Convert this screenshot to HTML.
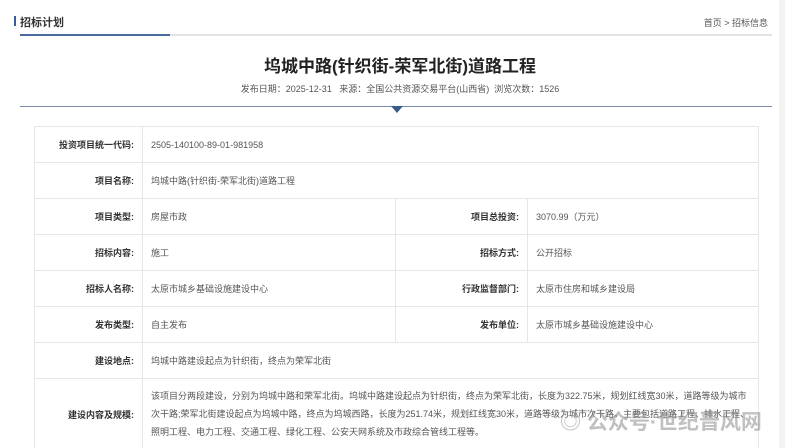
<!DOCTYPE html>
<html><head><meta charset="utf-8"><style>
html,body{margin:0;width:800px;height:448px;overflow:hidden}
body{background:#fff;font-family:"Liberation Sans","Noto Sans CJK SC",sans-serif;color:#333;position:relative}
.hd{position:absolute;left:20px;top:14px;font-size:11px;font-weight:bold;color:#333}
.hd:before{content:"";position:absolute;left:-6px;top:2px;width:2px;height:10px;background:#3a5a9a}
.bc{position:absolute;right:32px;top:16px;font-size:9px;color:#555}
.gl{position:absolute;left:20px;top:34px;width:752px;height:2px;background:#e3e3e3}
.bl{position:absolute;left:20px;top:34px;width:150px;height:2px;background:#4a6aa0}
.t{position:absolute;left:0;width:800px;text-align:center}
.title{top:52px;font-size:17px;font-weight:bold;color:#222}
.meta{top:82px;font-size:9px;color:#555}
.dv{position:absolute;left:20px;top:106px;width:752px;height:1px;background:#7a8aa8}
.tri{position:absolute;left:391px;top:106px;width:0;height:0;border-left:6px solid transparent;border-right:6px solid transparent;border-top:7px solid #3a5a8a}
table{position:absolute;left:34px;top:126px;width:725px;border-collapse:collapse;font-size:9px}
td{border:1px solid #e6e6e6;height:35px;padding:0 8px;color:#555}
td.l{text-align:right;font-weight:bold;color:#333;width:91px}
td.l2{text-align:right;font-weight:bold;color:#333;width:115px}
.wm{position:absolute;left:560px;top:406px;font-size:21px;color:rgba(140,140,140,.55);font-weight:bold}
.sb{position:absolute;left:779px;top:0;width:6px;height:448px;background:#f3f3f3}
</style></head><body>
<div class="hd">招标计划</div>
<div class="bc">首页 &gt; 招标信息</div>
<div class="gl"></div><div class="bl"></div>
<div class="t title">坞城中路(针织街-荣军北街)道路工程</div>
<div class="t meta">发布日期：2025-12-31&nbsp;&nbsp;&nbsp;来源：全国公共资源交易平台(山西省)&nbsp;&nbsp;浏览次数：1526</div>
<div class="dv"></div><div class="tri"></div>
<div class="sb"></div>
<table>
<tr><td class="l">投资项目统一代码:</td><td colspan="3">2505-140100-89-01-981958</td></tr>
<tr><td class="l">项目名称:</td><td colspan="3">坞城中路(针织街-荣军北街)道路工程</td></tr>
<tr><td class="l">项目类型:</td><td style="width:236px">房屋市政</td><td class="l2">项目总投资:</td><td>3070.99（万元）</td></tr>
<tr><td class="l">招标内容:</td><td>施工</td><td class="l2">招标方式:</td><td>公开招标</td></tr>
<tr><td class="l">招标人名称:</td><td>太原市城乡基础设施建设中心</td><td class="l2">行政监督部门:</td><td>太原市住房和城乡建设局</td></tr>
<tr><td class="l">发布类型:</td><td>自主发布</td><td class="l2">发布单位:</td><td>太原市城乡基础设施建设中心</td></tr>
<tr><td class="l">建设地点:</td><td colspan="3">坞城中路建设起点为针织街，终点为荣军北街</td></tr>
<tr><td class="l" style="height:70px">建设内容及规模:</td><td colspan="3" style="line-height:18px;padding-top:8px;padding-bottom:8px">该项目分两段建设，分别为坞城中路和荣军北街。坞城中路建设起点为针织街，终点为荣军北街，长度为322.75米，规划红线宽30米，道路等级为城市次干路;荣军北街建设起点为坞城中路，终点为坞城西路，长度为251.74米，规划红线宽30米，道路等级为城市次干路。主要包括道路工程、排水工程、照明工程、电力工程、交通工程、绿化工程、公安天网系统及市政综合管线工程等。</td></tr>
</table>
<div class="wm">◎ 公众号·世纪晋风网</div>
</body></html>
